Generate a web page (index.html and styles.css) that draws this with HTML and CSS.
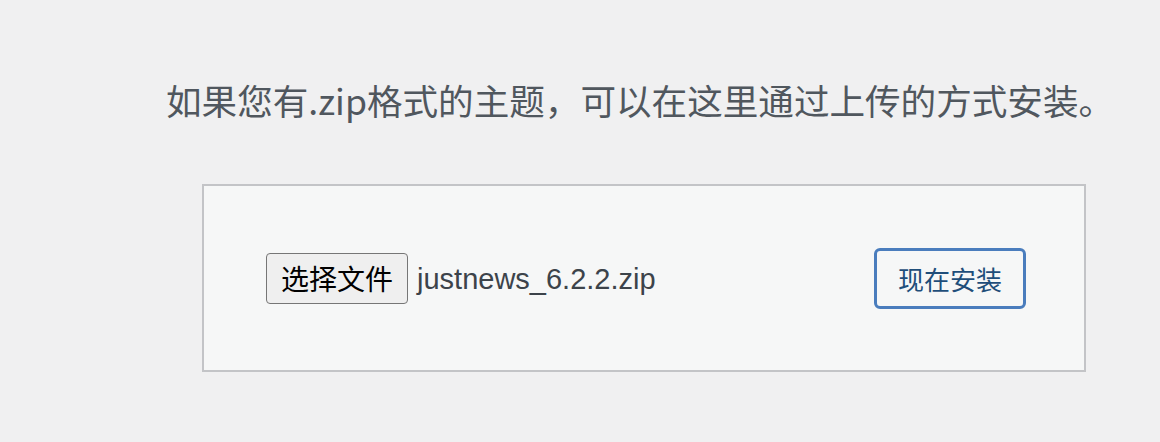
FILE: index.html
```html
<!DOCTYPE html>
<html lang="zh-CN">
<head>
<meta charset="utf-8">
<title>上传主题</title>
<link rel="stylesheet" href="styles.css">
</head>
<body>
<div class="wrap">
  <p class="install-help">如果您有.zip格式的主题，可以在这里通过上传的方式安装。</p>
  <form class="upload-form">
    <div class="file-field">
      <span class="file-btn">选择文件</span>
      <span class="file-name">justnews_6.2.2.zip</span>
    </div>
    <button type="button" class="install-btn">现在安装</button>
  </form>
</div>
</body>
</html>
```

FILE: styles.css
```css
html, body {
  margin: 0;
  padding: 0;
  background: #f0f0f1;
}

.wrap {
  padding: 74px 0 0 166px;
  font-family: "Noto Sans CJK SC", "Liberation Sans", sans-serif;
}

.install-help {
  margin: 0;
  font-size: 35.6px;
  line-height: 52px;
  color: #50575e;
  white-space: nowrap;
}

.upload-form {
  box-sizing: border-box;
  width: 884px;
  height: 188px;
  margin: 58px 0 0 36px;
  border: 2px solid #c3c4c7;
  background: #f6f7f7;
  display: flex;
  align-items: center;
  justify-content: space-between;
  padding: 0 58px 0 62px;
}

.file-field {
  display: flex;
  align-items: center;
  gap: 9px;
}

.file-btn {
  box-sizing: border-box;
  height: 51px;
  padding: 0 14px;
  display: flex;
  align-items: center;
  border: 1.5px solid #767676;
  border-radius: 4px;
  background: #efefef;
  color: #000;
  font-family: "Noto Sans CJK SC", sans-serif;
  font-size: 28px;
}

.file-name {
  font-family: "Liberation Sans", "Noto Sans CJK SC", sans-serif;
  font-size: 29px;
  color: #3c434a;
  padding-top: 2px;
}

.install-btn {
  box-sizing: border-box;
  width: 152px;
  height: 61px;
  border: 3px solid #4a7dbd;
  border-radius: 6px;
  background: #f6f7f7;
  color: #1f4e7a;
  font-family: "Noto Sans CJK SC", sans-serif;
  font-size: 26px;
  padding: 0;
}
```
